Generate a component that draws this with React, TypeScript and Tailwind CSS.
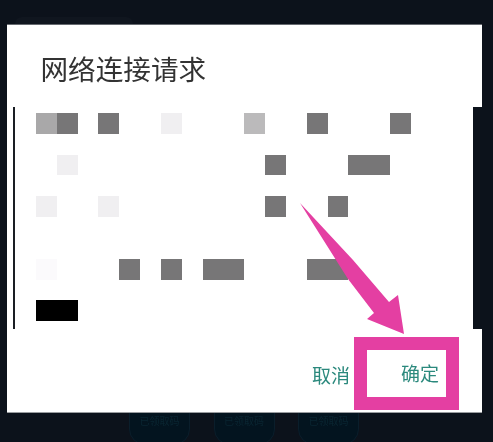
const cjk = "font-['Noto_Sans_CJK_SC','Noto_Sans',sans-serif]";

const cells: { row: number; col: number; span: number; color: string }[] = [
  { row: 1, col: 1, span: 1, color: "bg-[#a9a8a9]" },
  { row: 1, col: 2, span: 1, color: "bg-[#777677]" },
  { row: 1, col: 4, span: 1, color: "bg-[#777677]" },
  { row: 1, col: 7, span: 1, color: "bg-[#f0eff1]" },
  { row: 1, col: 11, span: 1, color: "bg-[#bbbabb]" },
  { row: 1, col: 14, span: 1, color: "bg-[#777677]" },
  { row: 1, col: 18, span: 1, color: "bg-[#777677]" },
  { row: 3, col: 2, span: 1, color: "bg-[#f0eff1]" },
  { row: 3, col: 12, span: 1, color: "bg-[#777677]" },
  { row: 3, col: 16, span: 2, color: "bg-[#777677]" },
  { row: 5, col: 1, span: 1, color: "bg-[#f0eff1]" },
  { row: 5, col: 4, span: 1, color: "bg-[#f0eff1]" },
  { row: 5, col: 12, span: 1, color: "bg-[#777677]" },
  { row: 5, col: 15, span: 1, color: "bg-[#777677]" },
  { row: 8, col: 1, span: 1, color: "bg-[#fbfafc]" },
  { row: 8, col: 5, span: 1, color: "bg-[#777677]" },
  { row: 8, col: 7, span: 1, color: "bg-[#777677]" },
  { row: 8, col: 9, span: 2, color: "bg-[#777677]" },
  { row: 8, col: 14, span: 2, color: "bg-[#777677]" },
  { row: 10, col: 1, span: 2, color: "bg-black" },
];

function Chip() {
  return (
    <div className="flex h-[52px] w-[61px] justify-center rounded-2xl border border-[#0a1e2b] bg-[#03141f] pt-[21px]">
      <span className={`text-[10px] leading-[12px] text-[#0a2632] ${cjk}`}>已领取码</span>
    </div>
  );
}

export default function App() {
  return (
    <div className="relative h-[442px] w-[493px] overflow-hidden bg-[#0c121b] blur-[0.3px]">
      <div className="ml-[15px] mt-[17px] h-[7px] w-[118px] rounded-t-lg bg-[#10161f]" />

      <div className="relative z-10 ml-[6.5px] w-[475px]">
        <div className="h-[83px] border-t border-[#666a70] bg-white pl-[34px] pt-[23px]">
          <h1 className={`text-[27.6px] font-normal leading-[40px] text-[#333333] ${cjk}`}>网络连接请求</h1>
        </div>

        <div className="flex h-[222px] w-[466.5px] bg-white pl-[6px]">
          <div className="h-full w-[2.5px] bg-[#1a1e24]" />
          <div className="ml-[21px] mt-[6px] grid grid-cols-[repeat(18,20.83px)] grid-rows-[repeat(10,20.83px)]">
            {cells.map((c) => (
              <div
                key={`${c.row}-${c.col}`}
                className={c.color}
                style={{ gridRow: c.row, gridColumn: `${c.col} / span ${c.span}` }}
              />
            ))}
          </div>
        </div>

        <div className={`flex h-[84px] items-start justify-end border-b border-[#9a9da0] bg-white pr-[22.5px] pt-[8px] ${cjk}`}>
          <button className="mr-[3.5px] mt-[26px] text-[19px] leading-[24px] text-[#2b897d]">取消</button>
          <button className="flex h-[73px] w-[105.5px] items-center justify-end border-[13.5px] border-[#e43fa2] pb-[2px] pr-[7px] text-[19px] leading-[24px] text-[#2b897d]">
            确定
          </button>
        </div>
      </div>

      <div className="-mt-[20px] ml-[129px] flex gap-[23.5px]">
        <Chip />
        <Chip />
        <Chip />
      </div>

      <svg className="absolute left-0 top-0 z-20" width="493" height="442" viewBox="0 0 493 442" fill="none">
        <polygon points="300,203 353,260 389,302 398,295 404,334 367,319 374,313 348,279" fill="#e43fa2" />
      </svg>
    </div>
  );
}
